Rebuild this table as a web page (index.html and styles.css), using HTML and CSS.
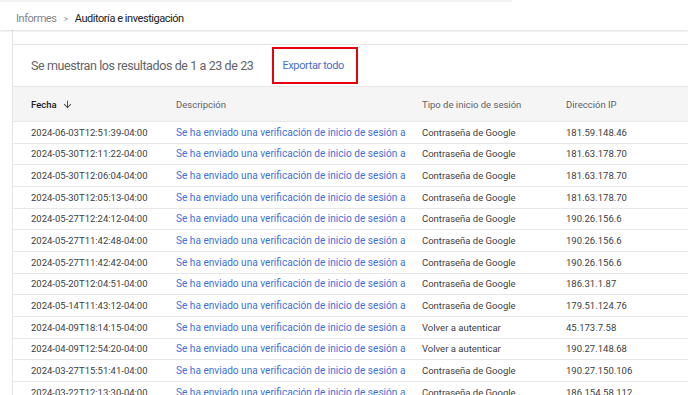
FILE: index.html
```html
<!DOCTYPE html>
<html lang="es">
<head>
    <meta charset="UTF-8">
    <meta name="viewport" content="width=device-width, initial-scale=1.0">
    <title>Auditoría e investigación</title>
    <link rel="stylesheet" href="styles.css">
</head>
<body>
    <div class="topbar">
        <div class="topbar-strip"></div>
        <nav class="breadcrumb">
            <span class="crumb">Informes</span>
            <span class="sep">&gt;</span>
            <span class="crumb current">Auditoría e investigación</span>
        </nav>
    </div>

    <div class="content">
        <div class="panel">
            <div class="results-bar">
                <span class="results-count">Se muestran los resultados de 1 a 23 de 23</span>
                <a href="#" class="export">Exportar todo</a>
            </div>

            <div class="table">
                <div class="row head">
                    <div class="cell sortable">Fecha
                        <svg class="sort-icon" viewBox="0 0 24 24" width="11" height="11"><path d="M20 12l-1.41-1.41L13 16.17V4h-2v12.17l-5.58-5.59L4 12l8 8 8-8z"/></svg>
                    </div>
                    <div class="cell">Descripción</div>
                    <div class="cell">Tipo de inicio de sesión</div>
                    <div class="cell">Dirección IP</div>
                </div>
                <div class="row"><div class="cell">2024-06-03T12:51:39-04:00</div><div class="cell link">Se ha enviado una verificación de inicio de sesión a</div><div class="cell">Contraseña de Google</div><div class="cell">181.59.148.46</div></div>
                <div class="row"><div class="cell">2024-05-30T12:11:22-04:00</div><div class="cell link">Se ha enviado una verificación de inicio de sesión a</div><div class="cell">Contraseña de Google</div><div class="cell">181.63.178.70</div></div>
                <div class="row"><div class="cell">2024-05-30T12:06:04-04:00</div><div class="cell link">Se ha enviado una verificación de inicio de sesión a</div><div class="cell">Contraseña de Google</div><div class="cell">181.63.178.70</div></div>
                <div class="row"><div class="cell">2024-05-30T12:05:13-04:00</div><div class="cell link">Se ha enviado una verificación de inicio de sesión a</div><div class="cell">Contraseña de Google</div><div class="cell">181.63.178.70</div></div>
                <div class="row"><div class="cell">2024-05-27T12:24:12-04:00</div><div class="cell link">Se ha enviado una verificación de inicio de sesión a</div><div class="cell">Contraseña de Google</div><div class="cell">190.26.156.6</div></div>
                <div class="row"><div class="cell">2024-05-27T11:42:48-04:00</div><div class="cell link">Se ha enviado una verificación de inicio de sesión a</div><div class="cell">Contraseña de Google</div><div class="cell">190.26.156.6</div></div>
                <div class="row"><div class="cell">2024-05-27T11:42:42-04:00</div><div class="cell link">Se ha enviado una verificación de inicio de sesión a</div><div class="cell">Contraseña de Google</div><div class="cell">190.26.156.6</div></div>
                <div class="row"><div class="cell">2024-05-20T12:04:51-04:00</div><div class="cell link">Se ha enviado una verificación de inicio de sesión a</div><div class="cell">Contraseña de Google</div><div class="cell">186.31.1.87</div></div>
                <div class="row"><div class="cell">2024-05-14T11:43:12-04:00</div><div class="cell link">Se ha enviado una verificación de inicio de sesión a</div><div class="cell">Contraseña de Google</div><div class="cell">179.51.124.76</div></div>
                <div class="row"><div class="cell">2024-04-09T18:14:15-04:00</div><div class="cell link">Se ha enviado una verificación de inicio de sesión a</div><div class="cell">Volver a autenticar</div><div class="cell">45.173.7.58</div></div>
                <div class="row"><div class="cell">2024-04-09T12:54:20-04:00</div><div class="cell link">Se ha enviado una verificación de inicio de sesión a</div><div class="cell">Volver a autenticar</div><div class="cell">190.27.148.68</div></div>
                <div class="row"><div class="cell">2024-03-27T15:51:41-04:00</div><div class="cell link">Se ha enviado una verificación de inicio de sesión a</div><div class="cell">Contraseña de Google</div><div class="cell">190.27.150.106</div></div>
                <div class="row"><div class="cell">2024-03-22T12:13:30-04:00</div><div class="cell link">Se ha enviado una verificación de inicio de sesión a</div><div class="cell">Contraseña de Google</div><div class="cell">186.154.58.112</div></div>
            </div>
        </div>
    </div>
</body>
</html>
```

FILE: styles.css
```css
* {
    margin: 0;
    padding: 0;
    box-sizing: border-box;
}

body {
    font-family: Roboto, 'Noto Sans', sans-serif;
    background: #fff;
    color: #3c4043;
    overflow: hidden;
}

.topbar {
    position: relative;
    height: 30px;
    background: #fff;
    box-shadow: 0 1px 2px rgba(0, 0, 0, 0.15);
    z-index: 1;
}

.topbar-strip {
    width: 512px;
    height: 2px;
    background: #f3f3f3;
}

.breadcrumb {
    display: flex;
    align-items: center;
    gap: 7px;
    padding: 10px 0 0 16px;
    font-size: 11px;
    letter-spacing: -0.45px;
}

.crumb {
    color: #80868b;
}

.crumb.current {
    color: #202124;
}

.sep {
    color: #9aa0a6;
    font-size: 9px;
}

.content {
    padding-left: 12px;
}

.panel {
    border-left: 1px solid #e4e4e4;
    padding-top: 14px;
}

.results-bar {
    display: flex;
    align-items: center;
    height: 42px;
    border-top: 1px solid #e6e6e6;
    padding-left: 18px;
}

.results-count {
    font-size: 12.5px;
    letter-spacing: -0.4px;
    color: #5f6368;
}

.export {
    margin-left: 19px;
    display: flex;
    align-items: center;
    height: 37px;
    padding: 0 12px 0 8px;
    border: 2px solid #e8000f;
    color: #4a6fc8;
    font-size: 11px;
    letter-spacing: -0.38px;
    text-decoration: none;
}

.table {
    border-top: 1px solid #e6e6e6;
}

.row {
    display: grid;
    grid-template-columns: 163px 246px 144px 1fr;
    align-items: center;
    height: 21.67px;
    border-bottom: 1px solid #e8e8e8;
    font-size: 9.5px;
    color: #3c4043;
}

.row.head {
    height: 35px;
    background: #f5f5f5;
    color: #5f6368;
    font-size: 9.5px;
}

.cell {
    padding-left: 18px;
    white-space: nowrap;
}

.row .cell + .cell {
    padding-left: 0;
}

.sortable {
    display: flex;
    align-items: center;
    gap: 5px;
    color: #202124;
    font-weight: 500;
}

.sort-icon {
    fill: #3c4043;
}

.link {
    color: #3f6fd6;
    font-size: 10.1px;
}
```
